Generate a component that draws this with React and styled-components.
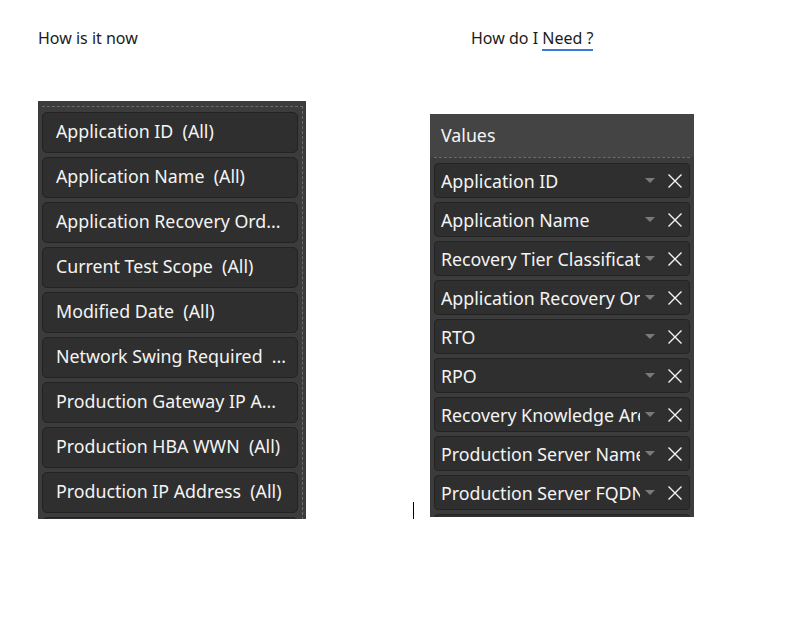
import React from "react";
import styled, { createGlobalStyle } from "styled-components";

const GlobalStyle = createGlobalStyle`
  html, body {
    margin: 0;
    padding: 0;
    background: #ffffff;
  }
`;

const Page = styled.div`
  width: 803px;
  height: 639px;
  box-sizing: border-box;
  padding: 27px 0 0 38px;
  font-family: "Noto Sans", "Liberation Sans", sans-serif;
`;

const LabelRow = styled.div`
  display: grid;
  grid-template-columns: 433px auto;
  height: 22px;
  font-size: 16px;
  color: #1b1b1b;
  line-height: 22px;
`;

const Underlined = styled.span`
  border-bottom: 2px solid #3b78d8;
`;

const PanelRow = styled.div`
  display: flex;
  align-items: flex-start;
  margin-top: 52px;
`;

const LeftPanel = styled.div`
  width: 268px;
  height: 418px;
  box-sizing: border-box;
  background: #3c3c3c;
  overflow: hidden;
  padding: 5px 3px 0 4px;
`;

const DashedArea = styled.div`
  border-top: 1px dashed #6a6a6a;
  border-right: 1px dashed #6a6a6a;
  padding: 5px 4px 0 0;
  display: flex;
  flex-direction: column;
  gap: 4px;
  height: 100%;
`;

const FieldChip = styled.div`
  height: 41px;
  flex: none;
  box-sizing: border-box;
  border: 1px solid #232323;
  border-radius: 5px;
  background: #2f2f2f;
  color: #f4f4f4;
  font-size: 17.8px;
  line-height: 36px;
  padding-left: 13px;
  white-space: pre;
  overflow: hidden;
`;

const Caret = styled.div`
  width: 1px;
  height: 17px;
  background: #000;
  margin: 401px 16px 0 107px;
`;

const RightPanel = styled.div`
  width: 264px;
  height: 403px;
  margin-top: 13px;
  box-sizing: border-box;
  background: #3c3c3c;
  overflow: hidden;
`;

const Header = styled.div`
  height: 43px;
  background: #444444;
  color: #f4f4f4;
  font-size: 17.8px;
  line-height: 43px;
  padding-left: 11px;
`;

const ValueList = styled.div`
  border-top: 1px dashed #6a6a6a;
  margin: 0 4px;
  padding-top: 5px;
  display: flex;
  flex-direction: column;
  gap: 4px;
`;

const ValueChip = styled.div`
  height: 35px;
  flex: none;
  box-sizing: border-box;
  border: 1px solid #232323;
  border-radius: 4px;
  background: #2f2f2f;
  display: flex;
  align-items: center;
  padding-left: 6px;
`;

const ValueText = styled.span`
  width: 199px;
  overflow: hidden;
  white-space: nowrap;
  color: #f4f4f4;
  font-size: 17.8px;
`;

const Arrow = styled.span`
  width: 0;
  height: 0;
  border-left: 5px solid transparent;
  border-right: 5px solid transparent;
  border-top: 5px solid #7a7a7a;
  margin-left: 5px;
`;

const Close = styled.svg`
  margin-left: 12px;
  width: 16px;
  height: 16px;
`;

const fields = [
  "Application ID  (All)",
  "Application Name  (All)",
  "Application Recovery Ord...",
  "Current Test Scope  (All)",
  "Modified Date  (All)",
  "Network Swing Required  ...",
  "Production Gateway IP A...",
  "Production HBA WWN  (All)",
  "Production IP Address  (All)",
  "Production Server Name  (All)",
];

const values = [
  "Application ID",
  "Application Name",
  "Recovery Tier Classification",
  "Application Recovery Order",
  "RTO",
  "RPO",
  "Recovery Knowledge Area",
  "Production Server Name",
  "Production Server FQDN",
  "Production IP Address",
];

export default function App() {
  return (
    <Page>
      <GlobalStyle />
      <LabelRow>
        <span>How is it now</span>
        <span>
          How do I <Underlined>Need ?</Underlined>
        </span>
      </LabelRow>
      <PanelRow>
        <LeftPanel>
          <DashedArea>
            {fields.map((f) => (
              <FieldChip key={f}>{f}</FieldChip>
            ))}
          </DashedArea>
        </LeftPanel>
        <Caret />
        <RightPanel>
          <Header>Values</Header>
          <ValueList>
            {values.map((v) => (
              <ValueChip key={v}>
                <ValueText>{v}</ValueText>
                <Arrow />
                <Close viewBox="0 0 16 16">
                  <path d="M1.5 1.5 L14.5 14.5 M14.5 1.5 L1.5 14.5" stroke="#f4f4f4" strokeWidth="1.4" fill="none" />
                </Close>
              </ValueChip>
            ))}
          </ValueList>
        </RightPanel>
      </PanelRow>
    </Page>
  );
}
